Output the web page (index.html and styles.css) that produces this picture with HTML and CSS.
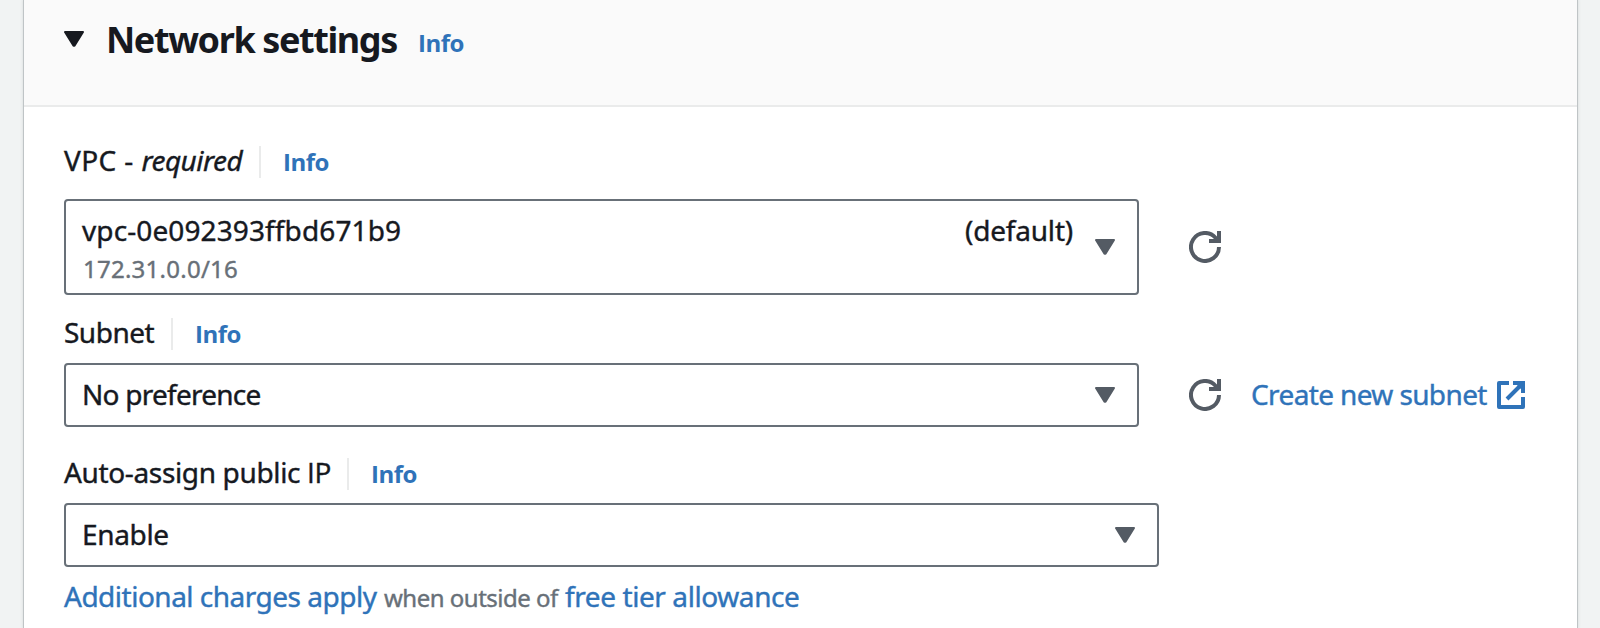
FILE: index.html
```
<!DOCTYPE html>
<html lang="en">
<head>
<meta charset="utf-8">
<title>Network settings</title>
<link rel="stylesheet" href="styles.css">
</head>
<body>
<svg class="defs" aria-hidden="true">
  <symbol id="caret" viewBox="0 0 20 16"><path d="M1 1h18L10.5 14.8h-1z" fill="currentColor" stroke="currentColor" stroke-width="2" stroke-linejoin="round"/></symbol>
  <symbol id="refresh" viewBox="0 0 32 32"><path d="M30 16A14 14 0 1 1 26.5 6.7L29 9.5M30 0v10H20" fill="none" stroke="currentColor" stroke-width="4"/></symbol>
  <symbol id="external" viewBox="0 0 28 28"><path d="M12 2H2v24h24V16M26 2L10 18" fill="none" stroke="currentColor" stroke-width="4" stroke-linejoin="round"/><path d="M16 0h12v12h-4V8l-4-4h-4z" fill="currentColor"/></symbol>
</svg>
<section class="panel">
  <header class="panel-header">
    <svg class="caret"><use href="#caret"/></svg>
    <h2 class="title">Network settings</h2>
    <a class="info">Info</a>
  </header>
  <div class="panel-body">
    <div class="field">
      <div class="label-row"><span class="label label-vpc">VPC - <i>required</i></span><a class="info">Info</a></div>
      <div class="control">
        <div class="select select-tall">
          <div class="option"><span class="vpc-id">vpc-0e092393ffbd671b9</span><span class="cidr">172.31.0.0/16</span></div>
          <span class="tag">(default)</span>
          <svg class="caret"><use href="#caret"/></svg>
        </div>
        <svg class="refresh"><use href="#refresh"/></svg>
      </div>
    </div>
    <div class="field field-subnet">
      <div class="label-row"><span class="label label-subnet">Subnet</span><a class="info">Info</a></div>
      <div class="control">
        <div class="select"><span class="value value-pref">No preference</span><svg class="caret"><use href="#caret"/></svg></div>
        <svg class="refresh"><use href="#refresh"/></svg>
        <a class="create">Create new subnet</a>
        <svg class="external"><use href="#external"/></svg>
      </div>
    </div>
    <div class="field field-ip">
      <div class="label-row"><span class="label label-ip">Auto-assign public <span class="plain">IP</span></span><a class="info">Info</a></div>
      <div class="select select-wide"><span class="value value-enable">Enable</span><svg class="caret"><use href="#caret"/></svg></div>
      <p class="hint"><a class="charges">Additional charges apply</a><span class="when">when outside of</span><a class="free">free tier allowance</a></p>
    </div>
  </div>
</section>
</body>
</html>
```
FILE: styles.css
```
* { box-sizing: border-box; }
body {
  margin: 0;
  height: 628px;
  padding: 0 23px 0 24px;
  overflow: hidden;
  background: #f1f3f3;
  color: #16191f;
  font: 28px/28px "Noto Sans", sans-serif;
  -webkit-text-stroke: 0.4px;
  white-space: nowrap;
}
.defs { position: absolute; width: 0; height: 0; }
.panel {
  height: 628px;
  background: #fff;
  box-shadow: 0 0 0 1px #bfc4c6, 0 0 3px 1px #d5dbdb;
}
.panel-header {
  display: flex;
  height: 107px;
  padding: 18px 0 0 40px;
  background: #fafafa;
  border-bottom: 2px solid #eaebeb;
}
.panel-header .caret { margin-top: 13px; color: #16191f; }
.title {
  width: 289px;
  margin: 2px 0 0 22px;
  font-size: 36px;
  line-height: 40px;
  letter-spacing: -1.4px;
  -webkit-text-stroke: 0;
}
.panel-header .info { margin: 11px 0 0 23px; }
.info {
  color: #2f73b9;
  font: bold 24px/28px "Open Sans", sans-serif;
  letter-spacing: -0.5px;
  -webkit-text-stroke: 0;
}
.panel-body { padding: 39px 0 0 40px; }
.label-row { display: flex; align-items: baseline; height: 32px; }
.label { height: 32px; border-right: 2px solid #eaebeb; }
.label-row .info { margin-left: 22px; }
.label-vpc { width: 197px; letter-spacing: 0.4px; }
.label-vpc i { letter-spacing: -0.54px; }
.label-subnet { width: 109px; letter-spacing: -0.5px; }
.label-ip { width: 285px; letter-spacing: -0.35px; }
.plain { font-family: "Open Sans", sans-serif; }
.control { display: flex; align-items: center; margin-top: 13px; }
.select {
  display: flex;
  align-items: center;
  width: 1075px;
  height: 64px;
  margin-top: 13px;
  padding: 0 22px 0 16px;
  border: 2px solid #687078;
  border-radius: 4px;
}
.control .select { margin-top: 0; }
.select .caret { margin-left: auto; }
.caret { width: 20px; height: 16px; flex: none; color: #545b64; }
.select-tall { height: 96px; }
.field:first-child .control { margin-top: 21px; }
.select-wide { width: 1095px; }
.field-subnet { margin-top: 23px; }
.field-ip { margin-top: 31px; }
.option { display: flex; flex-direction: column; height: 92px; padding-top: 14px; }
.vpc-id { letter-spacing: 0.11px; line-height: 30px; }
.cidr { padding-left: 1px; color: #687078; font-size: 24px; line-height: 48px; letter-spacing: 0.25px; }
.tag { height: 92px; padding-top: 14px; line-height: 30px; margin-left: auto; letter-spacing: -0.2px; }
.tag + .caret { margin-left: 22px; }
.value, .create { padding-bottom: 2px; }
.value-pref { letter-spacing: -0.75px; }
.value-enable { letter-spacing: -0.35px; }
.refresh { width: 32px; height: 32px; margin-left: 50px; color: #545b64; }
.create { width: 237px; margin-left: 30px; color: #2f73b9; letter-spacing: -0.62px; }
.external { width: 28px; height: 28px; margin-left: 9px; color: #2f73b9; }
.hint { display: flex; align-items: baseline; margin: 9px 0 0; line-height: 40px; color: #687078; }
.hint a { color: #2f73b9; }
.charges { width: 320px; letter-spacing: -0.5px; }
.when { width: 181px; font-size: 24px; letter-spacing: -0.5px; }
.free { letter-spacing: -0.41px; }
```
